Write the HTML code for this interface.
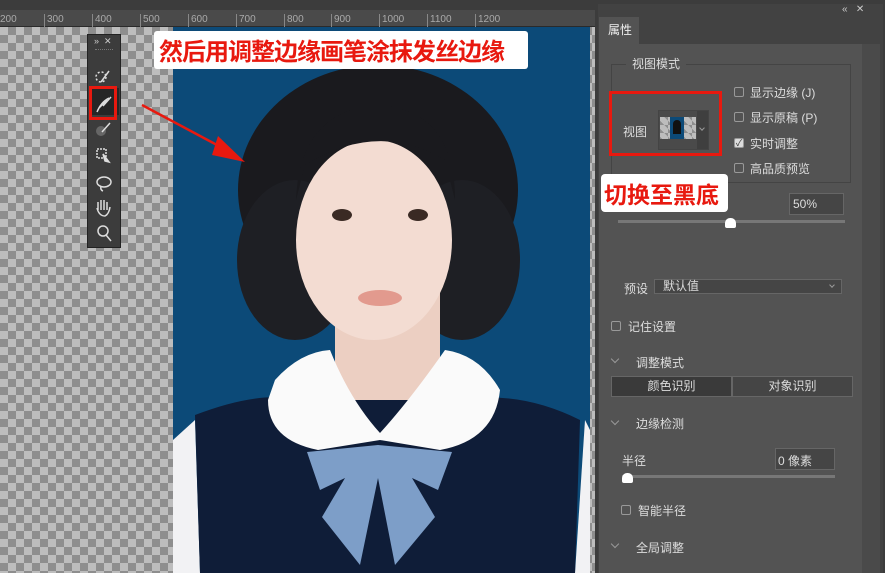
<!DOCTYPE html>
<html><head><meta charset="utf-8"><style>
*{margin:0;padding:0;box-sizing:border-box}
body{width:885px;height:573px;overflow:hidden;background:#535353;font-family:"Liberation Sans","Noto Sans CJK SC",sans-serif;position:relative;font-size:12px;color:#e0e0e0}
.abs{position:absolute}
.checker{background-color:#bdbdbd;background-image:linear-gradient(45deg,#8e8e8e 25%,transparent 25%,transparent 75%,#8e8e8e 75%),linear-gradient(45deg,#8e8e8e 25%,transparent 25%,transparent 75%,#8e8e8e 75%);background-size:16px 16px;background-position:0 0,8px 8px}
.ruler{background:#4a4a4a;border-bottom:1px solid #2a2a2a}
.rl{position:absolute;top:4px;font-size:10px;color:#aaa;border-left:1px solid #888;padding-left:2px;height:13px}
.cb{position:absolute;width:10px;height:10px;border:1px solid #999;border-radius:2px}
.lbl{position:absolute;font-size:12px;color:#ddd}
.chev{position:absolute;width:6px;height:6px;border-right:1px solid #999;border-bottom:1px solid #999;transform:rotate(45deg)}
</style></head><body>
<div class="abs" style="left:0;top:0;width:600px;height:10px;background:#3c3c3c"></div>
<div class="abs ruler" style="left:0;top:10px;width:598px;height:17px">
<span class="rl" style="left:-2px;border:none">200</span>
<span class="rl" style="left:44px">300</span><span class="rl" style="left:92px">400</span><span class="rl" style="left:140px">500</span><span class="rl" style="left:188px">600</span><span class="rl" style="left:236px">700</span><span class="rl" style="left:284px">800</span><span class="rl" style="left:331px">900</span><span class="rl" style="left:379px">1000</span><span class="rl" style="left:427px">1100</span><span class="rl" style="left:475px">1200</span>
</div>
<div class="abs checker" style="left:0;top:27px;width:598px;height:546px"></div>
<svg class="abs" style="left:173px;top:27px" width="417" height="546" viewBox="173 27 417 546">
<rect x="173" y="27" width="417" height="546" fill="#0c4a78"/>
<ellipse cx="378" cy="190" rx="140" ry="125" fill="#1a1a1e"/>
<ellipse cx="295" cy="260" rx="58" ry="80" fill="#1e1f24"/>
<ellipse cx="462" cy="260" rx="58" ry="80" fill="#1e1f24"/>
<rect x="335" y="290" width="105" height="110" fill="#eccfc2"/>
<ellipse cx="374" cy="240" rx="78" ry="100" fill="#f3dcd2"/>
<path d="M296 200 Q300 110 378 105 Q455 110 455 200 L445 160 Q378 120 305 165Z" fill="#1a1a1e"/>
<ellipse cx="342" cy="215" rx="10" ry="6" fill="#3a2a24"/>
<ellipse cx="418" cy="215" rx="10" ry="6" fill="#3a2a24"/>
<ellipse cx="380" cy="298" rx="22" ry="8" fill="#e29a8e"/>
<path d="M173 440 L195 420 L200 573 L173 573Z" fill="#f2f2f4"/>
<path d="M585 420 L590 430 L590 573 L575 573Z" fill="#f2f2f4"/>
<path d="M195 415 Q260 390 300 400 L460 400 Q520 390 580 420 L575 573 L200 573Z" fill="#0f1d38"/>
<path d="M275 380 Q300 352 330 350 Q350 400 380 433 Q410 400 445 350 Q480 355 500 390 Q495 440 440 450 L380 440 L318 450 Q268 440 268 400Z" fill="#fafafa"/>
<path d="M378 445 L307 452 L320 490 L345 478 L322 517 L360 565 L378 478 L395 565 L435 517 L412 478 L438 490 L452 452Z" fill="#7d9ec8"/>
</svg>
<div class="abs" style="left:87px;top:34px;width:34px;height:214px;background:#3c3c3c;border:1px solid #222">
<div style="color:#ccc;font-size:9px;padding:1px 0 0 6px">»&nbsp;&nbsp;✕</div>
<div style="margin:2px 7px;height:3px;border-top:1px dotted #777"></div>
</div>
<div class="abs" style="left:92px;top:88px;width:27px;height:27px;background:#262626"></div>
<div class="abs" style="left:89px;top:86px;width:28px;height:34px;border:3px solid #e8190f"></div>
<svg class="abs" style="left:87px;top:60px" width="34" height="190">
<g stroke="#ddd" fill="none" stroke-width="1.5">
<circle cx="14" cy="17" r="5" stroke-dasharray="2 2"/><line x1="14" y1="22" x2="22" y2="11"/>
<path d="M10 52 Q14 42 22 38 M12 48 L20 40"/><line x1="16" y1="46" x2="24" y2="37"/>
<circle cx="14" cy="71" r="5" fill="#666" stroke="none"/><line x1="15" y1="72" x2="23" y2="63"/>
<rect x="10" y="89" width="9" height="9" stroke-dasharray="2 1"/><path d="M16 94 L22 102 L18 101Z" fill="#ddd"/>
<ellipse cx="17" cy="122" rx="7" ry="5"/><path d="M14 126 Q13 130 16 131"/>
<path d="M11 150 L11 142 M14 150 L14 140 M17 150 L17 140 M20 150 L20 142 M10 148 Q12 156 18 156 Q22 154 23 147"/>
<circle cx="16" cy="171" r="5"/><line x1="19" y1="175" x2="24" y2="181"/>
</g></svg>
<div class="abs" style="left:154px;top:31px;width:374px;height:38px;background:#fff;border-radius:3px;color:#e8190f;font-weight:bold;font-size:24px;line-height:38px;padding-left:5px;font-family:'Noto Sans CJK SC',sans-serif;letter-spacing:-1px">然后用调整边缘画笔涂抹发丝边缘</div>
<svg class="abs" style="left:120px;top:100px" width="130" height="70"><line x1="22" y1="5" x2="112" y2="53" stroke="#e8190f" stroke-width="2.5"/><path d="M125 62 L98 36 L92 55Z" fill="#e8190f"/></svg>
<div class="abs" style="left:595px;top:0;width:290px;height:573px;background:#3c3c3c"></div>
<div class="abs" style="left:598px;top:4px;width:285px;height:569px;background:#424242"></div>
<div class="abs" style="left:842px;top:4px;color:#ccc;font-size:10px">«&nbsp;&nbsp;&nbsp;✕</div>
<div class="abs" style="left:599px;top:17px;width:40px;height:27px;background:#535353;color:#eee;font-size:12px;padding:4px 0 0 9px">属性</div>
<div class="abs" style="left:599px;top:44px;width:263px;height:529px;background:#535353"></div>
<div class="abs" style="left:862px;top:44px;width:18px;height:529px;background:#4a4a4a"></div>
<div class="abs" style="left:611px;top:64px;width:240px;height:119px;border:1px solid #444"></div>
<div class="abs" style="left:626px;top:55px;background:#535353;padding:0 6px;color:#ddd">视图模式</div>
<div class="lbl" style="left:623px;top:123px">视图</div>
<div class="abs" style="left:658px;top:110px;width:51px;height:40px;border:1px solid #444;background:#4a4a4a"></div>
<div class="abs checker" style="left:660px;top:117px;width:36px;height:22px;background-size:8px 8px"></div>
<div class="abs" style="left:670px;top:117px;width:14px;height:22px;background:#0c4a78"><div style="margin:3px auto;width:8px;height:14px;background:#111;border-radius:4px 4px 0 0"></div></div>
<div class="abs" style="left:697px;top:111px;width:11px;height:38px;background:#3f3f3f"></div>
<div class="chev" style="left:700px;top:126px;width:4px;height:4px"></div>
<div class="abs" style="left:609px;top:91px;width:113px;height:65px;border:3px solid #e8190f"></div>
<div class="cb" style="left:734px;top:87px"></div><div class="lbl" style="left:750px;top:84px">显示边缘 (J)</div>
<div class="cb" style="left:734px;top:112px"></div><div class="lbl" style="left:750px;top:109px">显示原稿 (P)</div>
<div class="cb" style="left:734px;top:138px;background:#ddd;color:#333;font-size:9px;line-height:8px;text-align:center">✓</div><div class="lbl" style="left:750px;top:135px">实时调整</div>
<div class="cb" style="left:734px;top:163px"></div><div class="lbl" style="left:750px;top:160px">高品质预览</div>
<div class="abs" style="left:601px;top:174px;width:127px;height:38px;background:#fff;border-radius:4px;color:#e8190f;font-weight:bold;font-size:23px;line-height:38px;padding-left:3px;font-family:'Noto Sans CJK SC',sans-serif">切换至黑底</div>
<div class="abs" style="left:789px;top:193px;width:55px;height:22px;background:#454545;border:1px solid #666;padding:3px 0 0 3px;color:#ddd">50%</div>
<div class="abs" style="left:618px;top:220px;width:227px;height:3px;background:#777"></div>
<div class="abs" style="left:725px;top:218px;width:11px;height:10px;background:#fff;border-radius:5px 5px 2px 2px"></div>
<div class="lbl" style="left:624px;top:280px">预设</div>
<div class="abs" style="left:654px;top:279px;width:188px;height:15px;background:#454545;border:1px solid #666;padding-left:8px;line-height:13px;color:#ddd">默认值</div>
<div class="chev" style="left:830px;top:283px;width:4px;height:4px"></div>
<div class="cb" style="left:611px;top:321px"></div><div class="lbl" style="left:628px;top:318px">记住设置</div>
<div class="chev" style="left:612px;top:356px"></div><div class="lbl" style="left:636px;top:354px">调整模式</div>
<div class="abs" style="left:611px;top:376px;width:121px;height:21px;background:#3a3a3a;border:1px solid #666;text-align:center;line-height:19px;color:#ddd">颜色识别</div>
<div class="abs" style="left:732px;top:376px;width:121px;height:21px;background:#454545;border:1px solid #666;text-align:center;line-height:19px;color:#ddd">对象识别</div>
<div class="chev" style="left:612px;top:418px"></div><div class="lbl" style="left:636px;top:415px">边缘检测</div>
<div class="lbl" style="left:622px;top:452px">半径</div>
<div class="abs" style="left:775px;top:448px;width:60px;height:22px;background:#454545;border:1px solid #666;padding:3px 0 0 2px;color:#ddd">0 像素</div>
<div class="abs" style="left:622px;top:475px;width:213px;height:3px;background:#777"></div>
<div class="abs" style="left:622px;top:473px;width:11px;height:10px;background:#fff;border-radius:5px 5px 2px 2px"></div>
<div class="cb" style="left:621px;top:505px"></div><div class="lbl" style="left:638px;top:502px">智能半径</div>
<div class="chev" style="left:612px;top:541px"></div><div class="lbl" style="left:636px;top:539px">全局调整</div>
</body></html>
